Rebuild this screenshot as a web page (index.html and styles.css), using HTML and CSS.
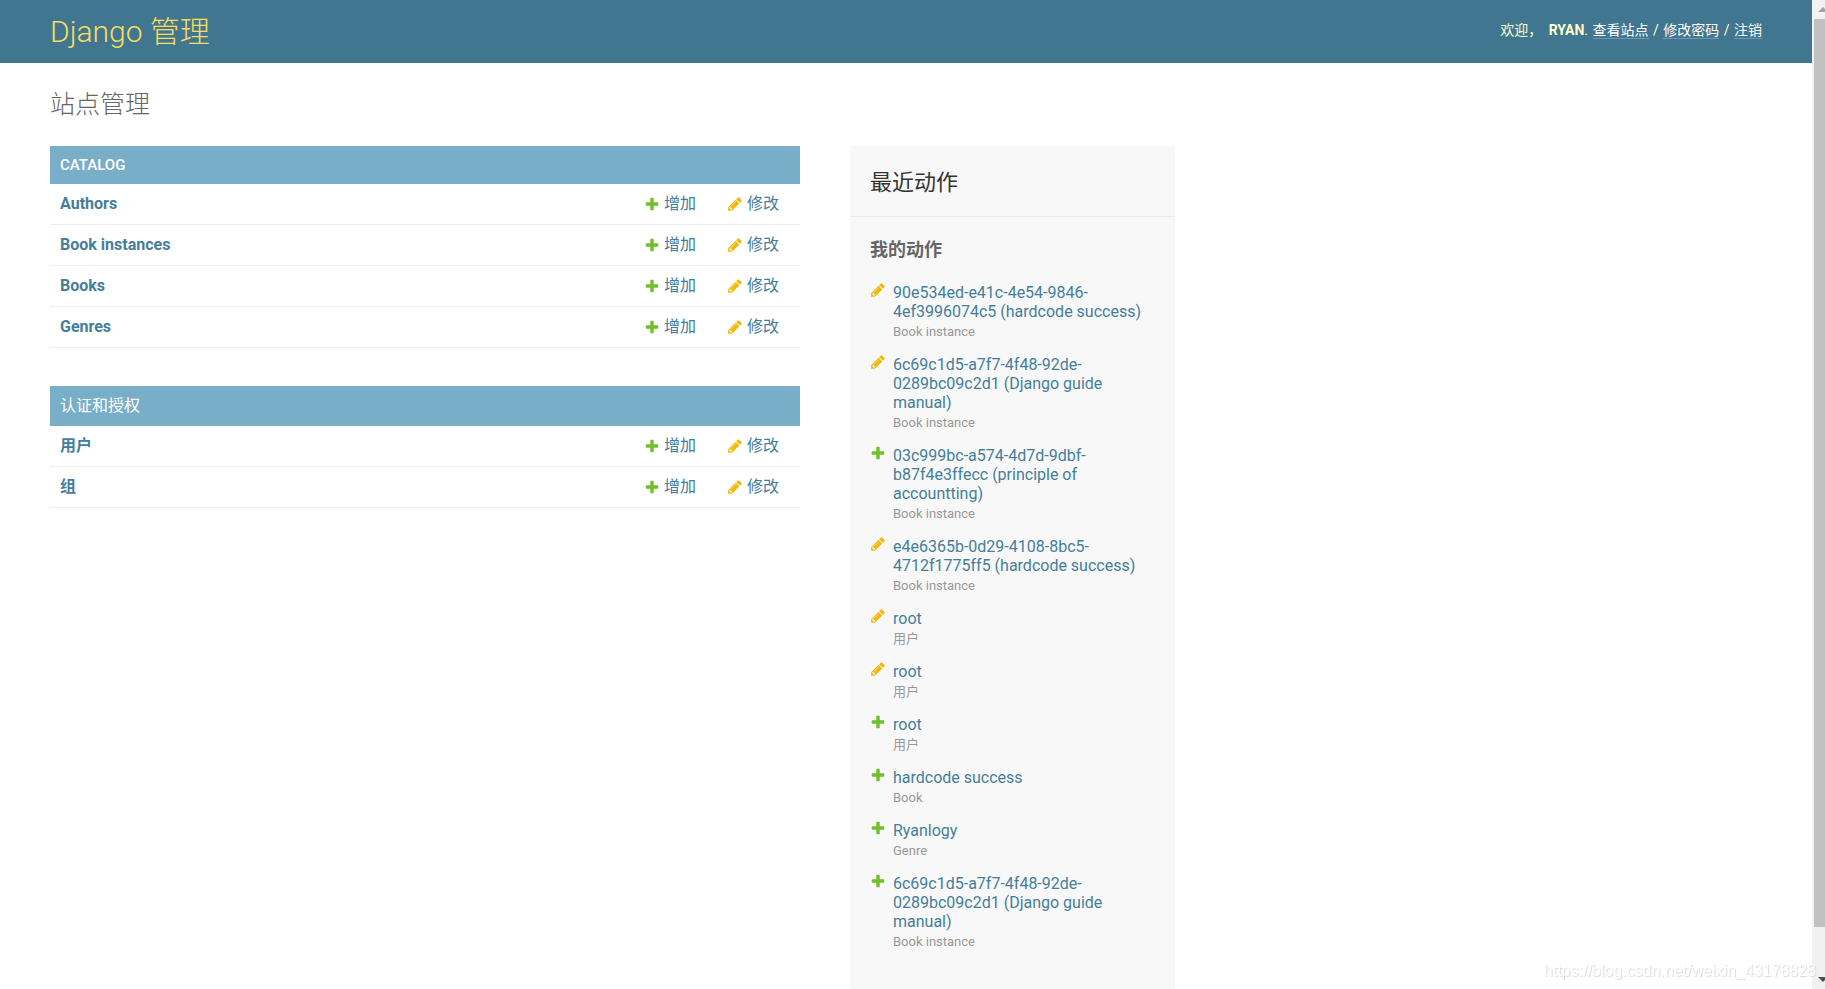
FILE: index.html
```html
<!DOCTYPE html>
<html lang="zh-Hans">
<head>
<meta charset="utf-8">
<title>站点管理 | Django 管理</title>
<link rel="stylesheet" href="styles.css">
</head>
<body>
<svg class="sprite" aria-hidden="true">
  <symbol id="add" viewBox="0 0 1792 1792"><path fill="#70bf2b" d="M1600 796v192q0 40-28 68t-68 28h-416v416q0 40-28 68t-68 28h-192q-40 0-68-28t-28-68v-416h-416q-40 0-68-28t-28-68v-192q0-40 28-68t68-28h416v-416q0-40 28-68t68-28h192q40 0 68 28t28 68v416h416q40 0 68 28t28 68z"/></symbol>
  <symbol id="change" viewBox="0 0 1792 1792"><path fill="#efb80b" d="M491 1536l91-91-235-235-91 91v107h128v128h107zm523-928q0-22-22-22-10 0-17 7l-542 542q-7 7-7 17 0 22 22 22 10 0 17-7l542-542q7-7 7-17zm-54-192l416 416-832 832h-416v-416zm683 96q0 53-37 90l-166 166-416-416 166-165q36-38 90-38 53 0 91 38l235 234q37 39 37 91z"/></symbol>
</svg>
<div class="window">
  <div class="page">
    <header class="header">
      <div class="branding"><a href="#">Django 管理</a></div>
      <div class="user-tools">欢迎， <strong>RYAN</strong>. <a href="#">查看站点</a> / <a href="#">修改密码</a> / <a href="#">注销</a></div>
    </header>
    <main class="content">
      <h1 class="title">站点管理</h1>
      <div class="columns">
        <div class="apps">
          <table class="module">
            <caption>CATALOG</caption>
            <tbody>
            <tr><th scope="row"><a href="#">Authors</a></th><td><a class="action" href="#"><svg class="icon"><use href="#add"/></svg>增加</a></td><td><a class="action" href="#"><svg class="icon"><use href="#change"/></svg>修改</a></td></tr>
            <tr><th scope="row"><a href="#">Book instances</a></th><td><a class="action" href="#"><svg class="icon"><use href="#add"/></svg>增加</a></td><td><a class="action" href="#"><svg class="icon"><use href="#change"/></svg>修改</a></td></tr>
            <tr><th scope="row"><a href="#">Books</a></th><td><a class="action" href="#"><svg class="icon"><use href="#add"/></svg>增加</a></td><td><a class="action" href="#"><svg class="icon"><use href="#change"/></svg>修改</a></td></tr>
            <tr><th scope="row"><a href="#">Genres</a></th><td><a class="action" href="#"><svg class="icon"><use href="#add"/></svg>增加</a></td><td><a class="action" href="#"><svg class="icon"><use href="#change"/></svg>修改</a></td></tr>
            </tbody>
          </table>
          <table class="module">
            <caption class="caption-cjk">认证和授权</caption>
            <tbody>
            <tr><th scope="row"><a href="#">用户</a></th><td><a class="action" href="#"><svg class="icon"><use href="#add"/></svg>增加</a></td><td><a class="action" href="#"><svg class="icon"><use href="#change"/></svg>修改</a></td></tr>
            <tr><th scope="row"><a href="#">组</a></th><td><a class="action" href="#"><svg class="icon"><use href="#add"/></svg>增加</a></td><td><a class="action" href="#"><svg class="icon"><use href="#change"/></svg>修改</a></td></tr>
            </tbody>
          </table>
        </div>
        <aside class="recent">
          <h2>最近动作</h2>
          <h3>我的动作</h3>
          <ul class="actions">
            <li><svg class="icon"><use href="#change"/></svg><div><a href="#">90e534ed-e41c-4e54-9846-4ef3996074c5 (hardcode success)</a><span class="mini">Book instance</span></div></li>
            <li><svg class="icon"><use href="#change"/></svg><div><a href="#">6c69c1d5-a7f7-4f48-92de-0289bc09c2d1 (Django guide manual)</a><span class="mini">Book instance</span></div></li>
            <li><svg class="icon"><use href="#add"/></svg><div><a href="#">03c999bc-a574-4d7d-9dbf-b87f4e3ffecc (principle of accountting)</a><span class="mini">Book instance</span></div></li>
            <li><svg class="icon"><use href="#change"/></svg><div><a href="#">e4e6365b-0d29-4108-8bc5-4712f1775ff5 (hardcode success)</a><span class="mini">Book instance</span></div></li>
            <li><svg class="icon"><use href="#change"/></svg><div><a href="#">root</a><span class="mini">用户</span></div></li>
            <li><svg class="icon"><use href="#change"/></svg><div><a href="#">root</a><span class="mini">用户</span></div></li>
            <li><svg class="icon"><use href="#add"/></svg><div><a href="#">root</a><span class="mini">用户</span></div></li>
            <li><svg class="icon"><use href="#add"/></svg><div><a href="#">hardcode success</a><span class="mini">Book</span></div></li>
            <li><svg class="icon"><use href="#add"/></svg><div><a href="#">Ryanlogy</a><span class="mini">Genre</span></div></li>
            <li><svg class="icon"><use href="#add"/></svg><div><a href="#">6c69c1d5-a7f7-4f48-92de-0289bc09c2d1 (Django guide manual)</a><span class="mini">Book instance</span></div></li>
          </ul>
        </aside>
      </div>
    </main>
  </div>
  <div class="scrollbar" aria-hidden="true">
    <svg class="arrow" viewBox="0 0 11 19"><path d="M4 12l5-5 5 5z" fill="#a3a3a3"/></svg>
    <div class="thumb"></div>
    <svg class="arrow" viewBox="0 0 11 19"><path d="M4 7h10l-5 5z" fill="#505050"/></svg>
  </div>
</div>
<div class="watermark">https://blog.csdn.net/weixin_43178828</div>
</body>
</html>
```
FILE: styles.css
```css
* { box-sizing: border-box; }

body {
  margin: 0;
  background: #fff;
  color: #333;
  font-family: Roboto, "Noto Sans CJK SC", sans-serif;
  font-size: 16px;
  line-height: 20px;
}

a { color: #447e9b; text-decoration: none; }

.sprite { display: none; }

.window { display: flex; height: 100vh; overflow: hidden; }
.page { flex: 1; min-width: 0; }

.header {
  display: flex;
  align-items: center;
  justify-content: space-between;
  padding: 9px 50px;
  background: #417690;
  color: #ffc;
}
.branding { font-size: 30px; line-height: 45px; font-weight: 300; }
.branding a { color: #f5dd5d; }
.user-tools { font-size: 14px; padding-bottom: 3px; }
.user-tools strong { margin-left: 3px; font-weight: 700; }
.user-tools a { margin: 0 1px; color: #fff; border-bottom: 1px solid rgba(255, 255, 255, 0.25); }
.user-tools a:last-child { margin-right: 0; }

.content { padding: 26px 50px 0; }
.title {
  margin: 0 0 25px;
  color: #666;
  font-size: 25px;
  line-height: 32px;
  font-weight: 300;
}

.columns { display: flex; align-items: flex-start; gap: 50px; }
.apps { width: 750px; }

.module {
  width: 100%;
  margin-bottom: 38px;
  border-collapse: collapse;
  table-layout: fixed;
}
.module caption {
  padding: 9px 10px;
  background: #79aec8;
  color: #fff;
  font-size: 15px;
  font-weight: 500;
  text-align: left;
}
.module .caption-cjk { padding: 10px; font-size: 16px; font-weight: 400; }
.module th, .module td {
  padding: 10px 0 10px 10px;
  border-bottom: 1px solid #eee;
  text-align: left;
}
.module td { width: 83px; }
.module th { font-weight: 700; }
.action { display: flex; align-items: center; gap: 4px; }
.icon { flex: none; width: 16px; height: 16px; }

.recent { width: 325px; background: #f8f8f8; }
.recent h2 {
  margin: 0;
  padding: 22px 20px 18px;
  border-bottom: 1px solid #eaeaea;
  font-size: 22px;
  line-height: 30px;
  font-weight: 400;
}
.recent h3 {
  margin: 0;
  padding: 20px 20px 16px;
  color: #666;
  font-size: 18px;
  line-height: 26px;
  font-weight: 700;
}
.actions { margin: 0; padding: 3px 20px 25px; list-style: none; }
.actions li { display: flex; gap: 7px; padding-bottom: 12px; line-height: 19px; }
.actions a { display: block; padding-top: 1px; }
.mini { display: block; padding-top: 1px; color: #999; font-size: 13px; line-height: 20px; }

.scrollbar {
  display: flex;
  flex-direction: column;
  width: 13px;
  padding-left: 2px;
  background: #f1f1f1;
}
.arrow { flex: none; width: 11px; height: 19px; }
.thumb { flex: 0 1 908px; margin-bottom: auto; background: #c1c1c1; }

.watermark {
  position: fixed;
  right: 9px;
  bottom: 8px;
  color: #fff;
  font-family: "Liberation Sans", Arial, sans-serif;
  font-size: 16px;
  text-shadow: 1px 1px 1px #d8d8d8;
}
```
